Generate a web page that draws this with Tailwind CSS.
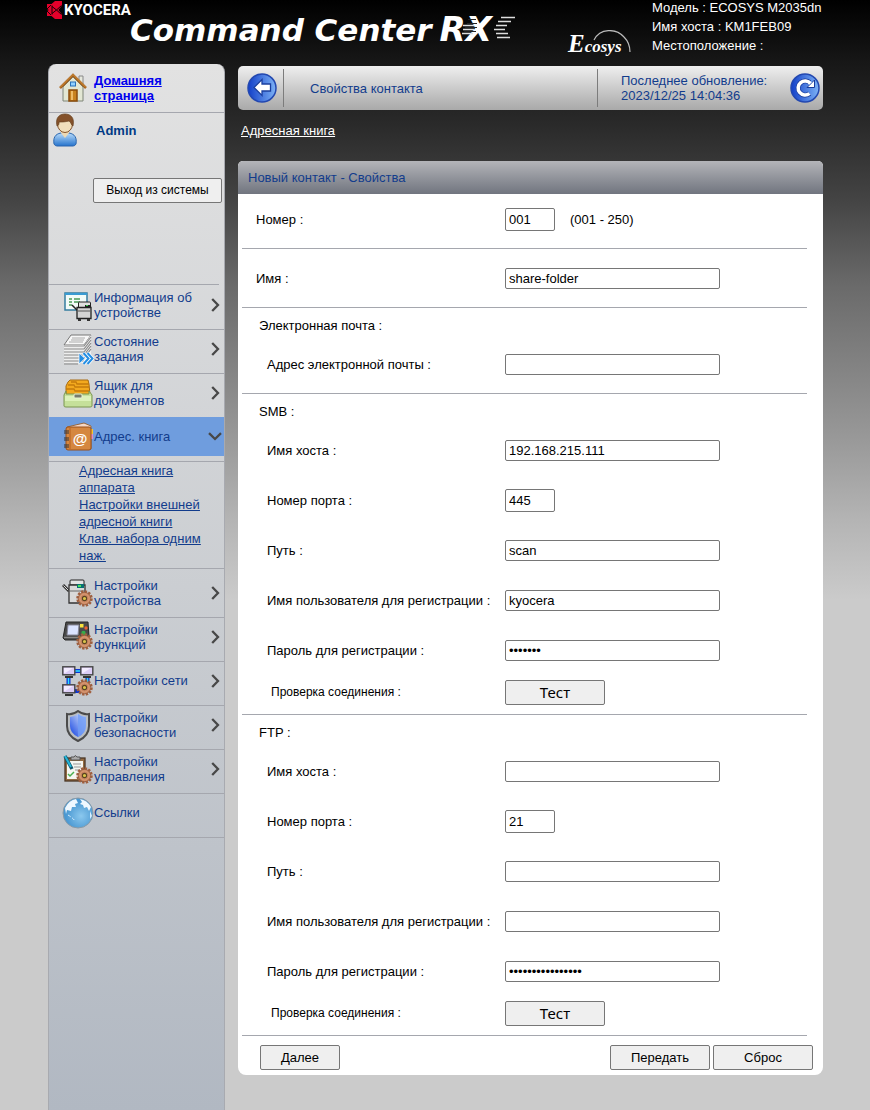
<!DOCTYPE html>
<html lang="ru">
<head>
<meta charset="utf-8">
<title>Command Center RX</title>
<script src="https://cdn.jsdelivr.net/npm/@tailwindcss/browser@4"></script>
</head>
<body class="font-['Liberation_Sans',sans-serif] text-[13px] leading-[15px] text-black bg-[#cccccc]">
<svg class="hidden" aria-hidden="true">
  <symbol id="gear" viewBox="0 0 16 16">
    <circle cx="8" cy="8" r="6.6" fill="none" stroke="#a06040" stroke-width="2.4" stroke-dasharray="2.2 1.255"/>
    <circle cx="8" cy="8" r="5.9" fill="#c98560" stroke="#8f5436" stroke-width=".7"/>
    <circle cx="8" cy="8" r="4.300" fill="none" stroke="#dda07a" stroke-width=".8"/>
    <circle cx="8" cy="8" r="2" fill="#d9c24a" stroke="#5a4422" stroke-width="1"/>
  </symbol>
  <symbol id="chev" viewBox="0 0 9 14"><path d="M1.2 1 7 7 1.2 13" fill="none" stroke="#484848" stroke-width="2.3"/></symbol>
  <symbol id="pc" viewBox="0 0 14 12">
    <rect x=".8" y=".8" width="12" height="8" fill="#dccdf6" stroke="#444" stroke-width="1.4"/><path d="M2 2h9l-8 5H2z" fill="#f3ecff"/><path d="M3 10h8v2H3z" fill="#333"/>
  </symbol>
</svg>
<div class="min-h-screen flex flex-col pl-12 pr-[47px] bg-[linear-gradient(to_bottom,#000_0px,#171717_62px,#2a2a2a_125px,#444_200px,#6a6a6a_285px,#999_440px,#b4b4b4_520px,#cbcbcb_600px)] bg-no-repeat">
  <header class="h-16 flex items-start">
    <div class="flex items-center w-[82px] h-5 -ml-px shrink-0">
      <svg class="w-[15px] h-[18px] shrink-0" viewBox="0 0 15 18"><path d="M0 3h4.500L8 0h7v4.500L11.500 9l3.500 4.500V18H8l-3.500-3H0v-5l2-1-2-1z" fill="#e4002b"/><path d="M5 4.500V13.500M5 5.500 9.500 9 5 12.500M9.500 9 14.500 4.500M9.500 9 14.500 13.500M0 8 4 4M0 10l4 4" stroke="#160004" stroke-width="1" fill="none"/></svg>
      <span class="font-['Roboto',sans-serif] font-bold text-[15px] leading-5 text-white ml-0.5">KYOCERA</span>
    </div>
    <div class="pt-3.5 pl-px flex-1 min-w-0 flex items-start whitespace-nowrap">
      <span class="font-['DejaVu_Sans',sans-serif] font-bold italic text-[31px] leading-8 text-white">Command Center</span>
      <span class="relative ml-2 font-['DejaVu_Sans',sans-serif] font-bold italic text-[34px] leading-[30px] text-white">RX
        <svg class="absolute left-[22px] top-[2px] w-[54px] h-6" viewBox="0 0 54 24"><path d="M39 1.500H53M36 5.500H49M34 9.500H45M32 13.500H43M34 17.500H46M35 21.500H48M1 9.500H12M1 13.500H12M0 17.500H11" stroke="#ddd" stroke-width="1.500"/><path d="M6 3.500H14M5 7.500H15M3 11.500H15M2 15.500H14" stroke="#222" stroke-width="1"/></svg>
      </span>
    </div>
    <div class="relative w-[84px] h-[60px] shrink-0">
      <svg class="absolute left-5 top-[30px] w-11 h-6" viewBox="0 0 44 24"><path d="M6 10C12-2 28-2 36 7 40 11 42 17 42 22" fill="none" stroke="#bbb" stroke-width="1.200"/></svg>
      <span class="absolute left-0 top-8 font-['Liberation_Serif',serif] font-bold italic text-[25px] leading-6 text-white">E<span class="text-[17px]">cosys</span></span>
    </div>
    <div class="w-[171px] shrink-0 text-white leading-[19px] -mt-0.5 whitespace-nowrap">
      <p>Модель : ECOSYS M2035dn</p><p>Имя хоста : KM1FEB09</p><p>Местоположение :</p>
    </div>
  </header>

  <div class="flex-1 flex gap-[13px]">
    <aside class="w-[177px] shrink-0 rounded-t-lg border-x border-[#a8aab0] bg-[linear-gradient(to_bottom,#e2e2e2,#cbced2_50%,#b1b8c2)] text-[#123c8c]">
      <a href="#" class="flex h-[49px] border-b border-[#a5a7ae] pl-[10px] pt-[9px] font-bold text-[#0000ee] underline">
        <svg class="w-7 h-[30px] mr-[7px] shrink-0" viewBox="0 0 28 30"><path d="M20 3h4v9h-4z" fill="#e6e8dd" stroke="#888" /><path d="M4 14 14 4 24 14V28H4z" fill="#e3e7d4" stroke="#7e8578"/><path d="M1 15 14 2 27 15" fill="none" stroke="#a3601c" stroke-width="2.500"/><path d="M1 14.500 14 1.500 27 14.500" fill="none" stroke="#e0a048" stroke-width=".8"/><rect x="11.500" y="9" width="5" height="4" fill="#8fd0ff" stroke="#2671bb"/><path d="M10 28V17h8v11z" fill="#c8821e" stroke="#8a4c0c" stroke-width="1.500"/><path d="M13 18v9" stroke="#eebb66" stroke-width="2"/></svg>
        <span>Домашняя страница</span>
      </a>
      <div class="h-[171px] flex flex-col">
        <div class="flex items-start pl-1 h-[65px]">
          <svg class="w-6 h-[34px] shrink-0" viewBox="0 0 24 34"><defs><linearGradient id="b" x2="0" y2="1"><stop stop-color="#b9dcfb"/><stop offset="1" stop-color="#2573cc"/></linearGradient></defs><path d="M1 31C0 25 2 21 8 20h8c6 1 8 5 7 11q-1 2-3 2H4q-2 0-3-2z" fill="url(#b)" stroke="#2c67ae"/><path d="M8 20l4 5 4-5v-4H8z" fill="#edd9b4"/><ellipse cx="12" cy="11" rx="7.500" ry="8.500" fill="#f1dfbb" stroke="#84512a"/><path d="M4 13C2 4 7 1 12 1s10 3 8 12c-2-1-2-4-4-5-4 1-7 1-10 1 0 2 0 3-2 4z" fill="#84512a" stroke="#65401f" stroke-width=".7"/></svg>
          <span class="font-bold text-[#003a85] ml-[19px] mt-[10px]">Admin</span>
        </div>
        <button class="self-end mr-0.5 w-[129px] h-[25px] rounded-xs border border-[#767676] bg-[#efefef] text-black text-[12px]">Выход из системы</button>
      </div>
      <div class="border-t border-[#a5a7ae] mr-[5px] pt-px"></div>
      <nav>
        <a href="#" class="flex h-11 border-b border-[#a5a7ae] pl-[13px] pr-1 pt-1">
          <svg class="w-8 h-8 shrink-0" viewBox="0 0 32 32"><rect x="3" y="3" width="22" height="17" fill="#f2fbf8" stroke="#367da0" stroke-width="1.500"/><path d="M3 3h22v2H3z" fill="#399bd3"/><path d="M7 9h3M12 9h6M7 12h3M12 12h6M7 15h3" stroke="#4a9b55" stroke-width="1.300"/><path d="M10 15l5 5" stroke="#222" stroke-width="1.500"/><rect x="16.500" y="12" width="12" height="6" rx="1" fill="#e0e0df" stroke="#222"/><path d="M15 17.500h14v11H15z" fill="#d4d4d4" stroke="#222" stroke-width="1.300"/><path d="M16 21h12" stroke="#555"/><path d="M23 15h5v2h-5z" fill="#222"/><path d="M24 15h2v1h-2z" fill="#3bd352"/><path d="M16 29h3v2h-3zM25 29h3v2h-3z" fill="#333"/></svg>
          <span class="flex-1">Информация об устройстве</span><svg class="w-[9px] h-3.5 mt-2 shrink-0"><use href="#chev"/></svg>
        </a>
        <a href="#" class="flex h-11 border-b border-[#a5a7ae] pl-[13px] pr-1 pt-1">
          <svg class="w-8 h-8 shrink-0" viewBox="0 0 32 32"><path d="M9 1h20l-7 10H2z" fill="#f7f7f7" stroke="#777"/><path d="M22 11l7-10v19l-7 9zM2 11h20v18H2z" fill="#eee"/><path d="M2 12h20l7-9M2 15h20l7-9M2 18h20l7-9M2 21h20l7-9M2 24h20l7-9M2 27h20M2 30h14" fill="none" stroke="#888" stroke-width="1.200"/><path d="M10 4h13M9 6h13M7 8h14" stroke="#aaa"/><path d="M17 19l6 5.500-6 5.500z" fill="#258ee3" stroke="#fff" stroke-width=".7"/><path d="M21.500 19l5 5.500-5 5.500M25.500 19l5 5.500-5 5.500" fill="none" stroke="#fff" stroke-width="3.500"/><path d="M21.500 19l5 5.500-5 5.500M25.500 19l5 5.500-5 5.500" fill="none" stroke="#258ee3" stroke-width="2"/></svg>
          <span class="flex-1">Состояние<br>задания</span><svg class="w-[9px] h-3.5 mt-2 shrink-0"><use href="#chev"/></svg>
        </a>
        <a href="#" class="flex h-11 border-b border-[#a5a7ae] pl-[13px] pr-1 pt-1">
          <svg class="w-8 h-8 shrink-0" viewBox="0 0 32 32"><path d="M6 4 8 2h18l1 4 1 11H4V8z" fill="#f3a91e" stroke="#a86b11"/><path d="M9 4h5l1 2h12M6 7h6l1 2h14M4 11h8l1 2h15" fill="none" stroke="#c57b0c" stroke-width="1.300"/><path d="M4 13l-2 4v11q0 1 2 1h24q2 0 2-1V17l-3-4v3H4z" fill="#c5e09a" stroke="#7b9650"/><path d="M3 18h26v5H3z" fill="#dcf2ba"/><rect x="12" y="16" width="8" height="4" rx="1" fill="#777d6d" stroke="#e9f4d4"/></svg>
          <span class="flex-1">Ящик для документов</span><svg class="w-[9px] h-3.5 mt-2 shrink-0"><use href="#chev"/></svg>
        </a>
        <a href="#" class="flex items-center h-[39px] bg-[#6f9dde] pl-[13px] pr-0.5 -mt-px">
          <svg class="w-8 h-8 shrink-0" viewBox="0 0 32 32"><path d="M5 6 22 2l7 3v23H5z" fill="#f5d8c6" stroke="#98673d"/><path d="M29 8h2v5h-2z" fill="#f5c430"/><path d="M29 13h2v5h-2z" fill="#e48cc3"/><rect x="4" y="6" width="25" height="23" rx="2" fill="#d58740" stroke="#9a501b"/><path d="M8 7v21" stroke="#b9601d"/><path d="M2 10h5M2 12h5M2 17h5M2 19h5M2 24h5M2 26h5" stroke="#333" stroke-width="1.200"/><text x="18" y="23" text-anchor="middle" font-family="Liberation Sans" font-size="15" font-weight="bold" fill="#fff">@</text></svg>
          <span class="flex-1">Адрес. книга</span><svg class="w-3.5 h-[9px] shrink-0" viewBox="0 0 14 9"><path d="M1 1.200 7 7 13 1.200" fill="none" stroke="#484848" stroke-width="2.300"/></svg>
        </a>
        <div class="mt-[5px] border-y border-[#a5a7ae] pl-[30px] pr-2 pb-1 leading-[17px] underline">
          <a href="#" class="block">Адресная книга аппарата</a><a href="#" class="block">Настройки внешней адресной книги</a><a href="#" class="block">Клав. набора одним наж.</a>
        </div>
        <a href="#" class="flex h-[49px] border-b border-[#a5a7ae] pl-[13px] pr-1 pt-[9px]">
          <svg class="w-8 h-8 shrink-0" viewBox="0 0 32 32"><path d="M1 7l6 6" stroke="#333" stroke-width="3"/><path d="M1.500 7.500l5 5" stroke="#ddd"/><rect x="8" y="2" width="14" height="5" rx="1" fill="#e4e4e4" stroke="#222"/><path d="M7 7h16v18H7z" fill="#d9d9d9" stroke="#333" stroke-width="1.300"/><path d="M7 13h16" stroke="#666"/><path d="M15 6h7v4h-7z" fill="#0a6f72"/><path d="M16 7h3v2h-3z" fill="#4be35b"/><use href="#gear" x="14" y="12" width="17" height="17"/></svg>
          <span class="flex-1">Настройки устройства</span><svg class="w-[9px] h-3.5 mt-2 shrink-0"><use href="#chev"/></svg>
        </a>
        <a href="#" class="flex h-11 border-b border-[#a5a7ae] pl-[13px] pr-1 pt-1">
          <svg class="w-8 h-8 -mt-1 shrink-0" viewBox="0 0 32 32"><path d="M4 4h22l1 14-2 4H3l-2-2z" fill="#4a4a4a" stroke="#262626"/><path d="M2 19.500h22" stroke="#888" stroke-width="1.300"/><path d="M6 7h11l-1 10H5z" fill="#dae3ff" stroke="#889"/><rect x="18" y="6" width="3.500" height="3.500" fill="#f8e23c"/><circle cx="24" cy="10" r="1.700" fill="#ed6131"/><circle cx="21.500" cy="15" r="2.200" fill="#33ad49"/><use href="#gear" x="14" y="15" width="17" height="17"/></svg>
          <span class="flex-1">Настройки функций</span><svg class="w-[9px] h-3.5 mt-2 shrink-0"><use href="#chev"/></svg>
        </a>
        <a href="#" class="flex h-11 border-b border-[#a5a7ae] pl-[13px] pr-1 items-start">
          <svg class="w-8 h-[34px] mt-[3px] shrink-0" viewBox="0 0 32 34"><path d="M13 6h6M6.500 12v7M25.500 12v5M13 26h5" stroke="#0b34d5" stroke-width="4"/><path d="M13 6h6M6.500 12v7M25.500 12v5" stroke="#30dffb" stroke-width="1.500"/><use href="#pc" x="0" y="1" width="14" height="12"/><use href="#pc" x="18" y="1" width="14" height="12"/><use href="#pc" x="0" y="19" width="14" height="12"/><use href="#gear" x="14" y="14" width="17" height="17"/></svg>
          <span class="flex-1 mt-[11px]">Настройки сети</span><svg class="w-[9px] h-3.5 mt-3 shrink-0"><use href="#chev"/></svg>
        </a>
        <a href="#" class="flex h-11 border-b border-[#a5a7ae] pl-[13px] pr-1 pt-1">
          <svg class="w-8 h-8 shrink-0" viewBox="0 0 32 32"><defs><linearGradient id="s" x1="1" y1="0" x2="0" y2="1"><stop stop-color="#e6f2ff"/><stop offset="1" stop-color="#0f3fe0"/></linearGradient></defs><path d="M16 1q5 4 11 3v12q0 10-11 15Q5 26 5 16V4q6 1 11-3z" fill="#b9bdc1" stroke="#4b4b4b" stroke-width="2"/><path d="M16 4q4 3 8 3v9q0 7-8 11Q8 23 8 16V7q4 0 8-3z" fill="url(#s)"/><path d="M16 4q4 3 8 3v9q0 7-8 11z" fill="#6f9bf5" opacity=".8"/></svg>
          <span class="flex-1">Настройки безопасности</span><svg class="w-[9px] h-3.5 mt-2 shrink-0"><use href="#chev"/></svg>
        </a>
        <a href="#" class="flex h-11 border-b border-[#a5a7ae] pl-[13px] pr-1 pt-1">
          <svg class="w-8 h-8 shrink-0" viewBox="0 0 32 32"><rect x="3" y="4" width="20" height="23" fill="#946c42" stroke="#4a3726" stroke-width="1.300"/><path d="M5 7h16v18H5z" fill="#f6f6f1"/><path d="M9 6V3h3q1-3 3 0h3v3z" fill="#aaa" stroke="#555"/><path d="M11 10h8M12 13h7M13 16h5" stroke="#999"/><path d="M6 20l2 2 4-4" fill="none" stroke="#4caf50" stroke-width="1.500"/><path d="M3 2l7 13" stroke="#13576d" stroke-width="3.500"/><path d="M3 2l6 11" stroke="#27b6d8" stroke-width="2"/><use href="#gear" x="14" y="13" width="17" height="17"/></svg>
          <span class="flex-1">Настройки управления</span><svg class="w-[9px] h-3.5 mt-2 shrink-0"><use href="#chev"/></svg>
        </a>
        <a href="#" class="flex h-11 border-b border-[#a5a7ae] pl-[13px] pr-1 pt-[3px]">
          <svg class="w-8 h-8 shrink-0" viewBox="0 0 32 32"><defs><radialGradient id="g" cx=".6" cy=".6"><stop stop-color="#8bc8ee"/><stop offset="1" stop-color="#4a98d2"/></radialGradient></defs><circle cx="16" cy="16" r="15" fill="url(#g)" stroke="#8a9aa6"/><path d="M3 11q4-8 11-9l2 4-3 1 1 3-4 0-1 4-4-1-1 4zM18 2q7 1 11 8l-2 4-2-4-3 1-1-3-3-1 2-2z" fill="#eff8ff"/><path d="M28 14l2 5-2 3z" fill="#d8efff"/><path d="M6 18q5 3 7 6" stroke="#d8efff" stroke-width="1" fill="none" stroke-dasharray="3 2"/></svg>
          <span class="flex-1 mt-2">Ссылки</span>
        </a>
      </nav>
    </aside>

    <main class="flex-1 min-w-0 pt-0.5 pb-[35px]">
      <div class="h-11 rounded-[5px] bg-linear-to-b from-[#efefef] to-[#a9a9a9] flex items-center text-[#123c8c]">
        <button class="ml-2 shrink-0" aria-label="Назад">
          <svg class="w-8 h-8 block" viewBox="0 0 32 32"><defs><linearGradient id="o" x2="1" y2="0"><stop stop-color="#123fc8"/><stop offset="1" stop-color="#7db2f5"/></linearGradient></defs><circle cx="16" cy="16" r="14" fill="url(#o)" stroke="#2348b0" stroke-width="1.500"/><path d="M8 15.500 16 7.500v4.500h8.500v7H16v4.500z" fill="#fff" stroke="#1a3f9e" stroke-width="1.300"/></svg>
        </button>
        <div class="flex-1 ml-[5px] h-[38px] border-x border-[#7c7c7c] pl-[26px] flex items-center">Свойства контакта</div>
        <p class="w-[168px] ml-[23px] shrink-0">Последнее обновление:<br>2023/12/25 14:04:36</p>
        <button class="mr-0.5 shrink-0" aria-label="Обновить">
          <svg class="w-8 h-8 block" viewBox="0 0 32 32"><circle cx="16" cy="16" r="14" fill="url(#o)" stroke="#2348b0" stroke-width="1.500"/><path d="M20.500 21.500A7 7 0 1 1 20.500 10.500" fill="none" stroke="#173a9a" stroke-width="5"/><path d="M25.500 8v7.500H18z" fill="#fff" stroke="#173a9a"/><path d="M20.500 21.500A7 7 0 1 1 21.500 11.500" fill="none" stroke="#fff" stroke-width="3.500"/></svg>
        </button>
      </div>
      <a href="#" class="block w-fit ml-[3px] mt-[13px] mb-[23px] text-white underline">Адресная книга</a>

      <form class="rounded-t-[5px] rounded-b-lg bg-white overflow-hidden">
        <h1 class="h-[33px] leading-[33px] pl-[10px] bg-linear-to-b from-[#b4b5b9] to-[#71757f] text-[#123c8c]">Новый контакт - Свойства</h1>
        <div class="ml-1 mr-4">
          <div class="flex items-center border-b border-[#a5a7ae] pt-3.5 pb-[17px] pl-3.5">
            <label for="num" class="w-[249px] shrink-0">Номер :</label><input id="num" value="001" class="w-[50px] h-[23px] border border-[#767676] rounded-xs px-[3px]"><span class="ml-[15px]">(001 - 250)</span>
          </div>
          <div class="flex items-center border-b border-[#a5a7ae] pt-[19px] pb-[18px] pl-3.5">
            <label for="name" class="w-[249px] shrink-0">Имя :</label><input id="name" value="share-folder" class="w-[215px] h-[21px] border border-[#767676] rounded-xs px-[3px]">
          </div>
          <section class="border-b border-[#a5a7ae] pt-2 pb-[18px]">
            <h2 class="leading-5 pl-[17px] mb-[18px]">Электронная почта :</h2>
            <div class="flex items-center h-[21px] pl-[25px]"><label for="mail" class="w-[238px] shrink-0">Адрес электронной почты :</label><input id="mail" class="w-[215px] h-[21px] border border-[#767676] rounded-xs px-[3px]"></div>
          </section>
          <section class="border-b border-[#a5a7ae] pt-2 pb-[9px]">
            <h2 class="leading-5 pl-[17px] mb-[18px]">SMB :</h2>
            <div class="flex flex-col gap-[29px] pl-[25px]">
              <div class="flex items-center h-[21px]"><label for="sh" class="w-[238px] shrink-0">Имя хоста :</label><input id="sh" value="192.168.215.111" class="w-[215px] h-[21px] border border-[#767676] rounded-xs px-[3px]"></div>
              <div class="flex items-center h-[21px]"><label for="sp" class="w-[238px] shrink-0">Номер порта :</label><input id="sp" value="445" class="w-[50px] h-[23px] border border-[#767676] rounded-xs px-[3px]"></div>
              <div class="flex items-center h-[21px]"><label for="sd" class="w-[238px] shrink-0">Путь :</label><input id="sd" value="scan" class="w-[215px] h-[21px] border border-[#767676] rounded-xs px-[3px]"></div>
              <div class="flex items-center h-[21px]"><label for="su" class="w-[238px] shrink-0">Имя пользователя для регистрации :</label><input id="su" value="kyocera" class="w-[215px] h-[21px] border border-[#767676] rounded-xs px-[3px]"></div>
              <div class="flex items-center h-[21px]"><label for="sw" class="w-[238px] shrink-0">Пароль для регистрации :</label><input id="sw" type="password" value="1234567" class="w-[215px] h-[21px] border border-[#767676] rounded-xs px-[3px]"></div>
            </div>
            <div class="flex items-center mt-[19px] pl-[29px]"><span class="w-[234px] shrink-0 text-[12px]">Проверка соединения :</span><button type="button" class="w-[100px] h-[25px] border border-[#767676] rounded-xs bg-[#efefef] font-['Noto_Sans',sans-serif] text-[15px]">Тест</button></div>
          </section>
          <section class="border-b border-[#a5a7ae] pt-2 pb-[9px]">
            <h2 class="leading-5 pl-[17px] mb-[18px]">FTP :</h2>
            <div class="flex flex-col gap-[29px] pl-[25px]">
              <div class="flex items-center h-[21px]"><label for="fh" class="w-[238px] shrink-0">Имя хоста :</label><input id="fh" class="w-[215px] h-[21px] border border-[#767676] rounded-xs px-[3px]"></div>
              <div class="flex items-center h-[21px]"><label for="fp" class="w-[238px] shrink-0">Номер порта :</label><input id="fp" value="21" class="w-[50px] h-[23px] border border-[#767676] rounded-xs px-[3px]"></div>
              <div class="flex items-center h-[21px]"><label for="fd" class="w-[238px] shrink-0">Путь :</label><input id="fd" class="w-[215px] h-[21px] border border-[#767676] rounded-xs px-[3px]"></div>
              <div class="flex items-center h-[21px]"><label for="fu" class="w-[238px] shrink-0">Имя пользователя для регистрации :</label><input id="fu" class="w-[215px] h-[21px] border border-[#767676] rounded-xs px-[3px]"></div>
              <div class="flex items-center h-[21px]"><label for="fw" class="w-[238px] shrink-0">Пароль для регистрации :</label><input id="fw" type="password" value="1234567890123456" class="w-[215px] h-[21px] border border-[#767676] rounded-xs px-[3px]"></div>
            </div>
            <div class="flex items-center mt-[19px] pl-[29px]"><span class="w-[234px] shrink-0 text-[12px]">Проверка соединения :</span><button type="button" class="w-[100px] h-[25px] border border-[#767676] rounded-xs bg-[#efefef] font-['Noto_Sans',sans-serif] text-[15px]">Тест</button></div>
          </section>
        </div>
        <div class="flex gap-[3px] pt-[9px] pb-[5px] pl-[22px] pr-[10px]">
          <button type="button" class="w-20 h-[25px] mr-auto border border-[#767676] rounded-xs bg-[#efefef]">Далее</button>
          <button type="button" class="w-[100px] h-[25px] border border-[#767676] rounded-xs bg-[#efefef]">Передать</button>
          <button type="reset" class="w-[100px] h-[25px] border border-[#767676] rounded-xs bg-[#efefef]">Сброс</button>
        </div>
      </form>
    </main>
  </div>
</div>
</body>
</html>
